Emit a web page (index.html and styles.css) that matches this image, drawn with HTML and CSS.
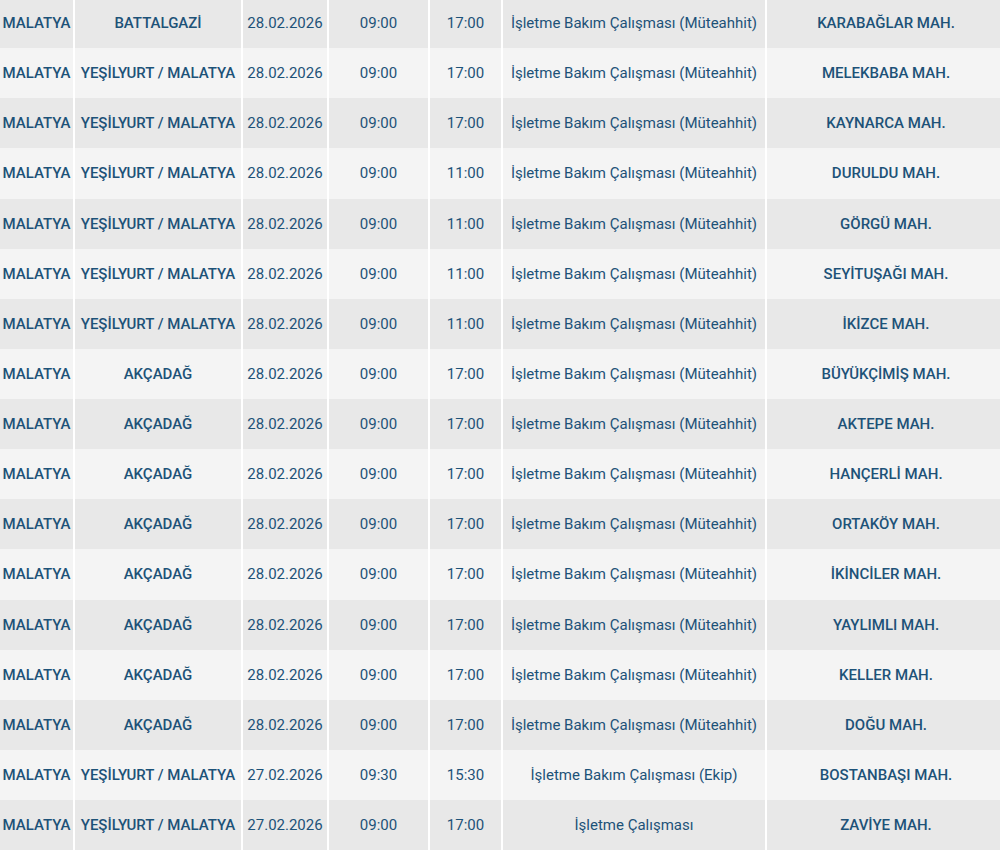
FILE: index.html
```html
<!DOCTYPE html>
<html lang="tr">
<head>
<meta charset="utf-8">
<link rel="stylesheet" href="styles.css">
</head>
<body>
<div class="wrap">
<table class="outages">
<colgroup>
<col class="c-city"><col class="c-dist"><col class="c-date"><col class="c-start"><col class="c-end"><col class="c-desc"><col class="c-mah">
</colgroup>
<tbody>
<tr><td class="b">MALATYA</td><td class="b">BATTALGAZİ</td><td>28.02.2026</td><td>09:00</td><td>17:00</td><td>İşletme Bakım Çalışması (Müteahhit)</td><td class="b">KARABAĞLAR MAH.</td></tr>
<tr><td class="b">MALATYA</td><td class="b">YEŞİLYURT / MALATYA</td><td>28.02.2026</td><td>09:00</td><td>17:00</td><td>İşletme Bakım Çalışması (Müteahhit)</td><td class="b">MELEKBABA MAH.</td></tr>
<tr><td class="b">MALATYA</td><td class="b">YEŞİLYURT / MALATYA</td><td>28.02.2026</td><td>09:00</td><td>17:00</td><td>İşletme Bakım Çalışması (Müteahhit)</td><td class="b">KAYNARCA MAH.</td></tr>
<tr><td class="b">MALATYA</td><td class="b">YEŞİLYURT / MALATYA</td><td>28.02.2026</td><td>09:00</td><td>11:00</td><td>İşletme Bakım Çalışması (Müteahhit)</td><td class="b">DURULDU MAH.</td></tr>
<tr><td class="b">MALATYA</td><td class="b">YEŞİLYURT / MALATYA</td><td>28.02.2026</td><td>09:00</td><td>11:00</td><td>İşletme Bakım Çalışması (Müteahhit)</td><td class="b">GÖRGÜ MAH.</td></tr>
<tr><td class="b">MALATYA</td><td class="b">YEŞİLYURT / MALATYA</td><td>28.02.2026</td><td>09:00</td><td>11:00</td><td>İşletme Bakım Çalışması (Müteahhit)</td><td class="b">SEYİTUŞAĞI MAH.</td></tr>
<tr><td class="b">MALATYA</td><td class="b">YEŞİLYURT / MALATYA</td><td>28.02.2026</td><td>09:00</td><td>11:00</td><td>İşletme Bakım Çalışması (Müteahhit)</td><td class="b">İKİZCE MAH.</td></tr>
<tr><td class="b">MALATYA</td><td class="b">AKÇADAĞ</td><td>28.02.2026</td><td>09:00</td><td>17:00</td><td>İşletme Bakım Çalışması (Müteahhit)</td><td class="b">BÜYÜKÇİMİŞ MAH.</td></tr>
<tr><td class="b">MALATYA</td><td class="b">AKÇADAĞ</td><td>28.02.2026</td><td>09:00</td><td>17:00</td><td>İşletme Bakım Çalışması (Müteahhit)</td><td class="b">AKTEPE MAH.</td></tr>
<tr><td class="b">MALATYA</td><td class="b">AKÇADAĞ</td><td>28.02.2026</td><td>09:00</td><td>17:00</td><td>İşletme Bakım Çalışması (Müteahhit)</td><td class="b">HANÇERLİ MAH.</td></tr>
<tr><td class="b">MALATYA</td><td class="b">AKÇADAĞ</td><td>28.02.2026</td><td>09:00</td><td>17:00</td><td>İşletme Bakım Çalışması (Müteahhit)</td><td class="b">ORTAKÖY MAH.</td></tr>
<tr><td class="b">MALATYA</td><td class="b">AKÇADAĞ</td><td>28.02.2026</td><td>09:00</td><td>17:00</td><td>İşletme Bakım Çalışması (Müteahhit)</td><td class="b">İKİNCİLER MAH.</td></tr>
<tr><td class="b">MALATYA</td><td class="b">AKÇADAĞ</td><td>28.02.2026</td><td>09:00</td><td>17:00</td><td>İşletme Bakım Çalışması (Müteahhit)</td><td class="b">YAYLIMLI MAH.</td></tr>
<tr><td class="b">MALATYA</td><td class="b">AKÇADAĞ</td><td>28.02.2026</td><td>09:00</td><td>17:00</td><td>İşletme Bakım Çalışması (Müteahhit)</td><td class="b">KELLER MAH.</td></tr>
<tr><td class="b">MALATYA</td><td class="b">AKÇADAĞ</td><td>28.02.2026</td><td>09:00</td><td>17:00</td><td>İşletme Bakım Çalışması (Müteahhit)</td><td class="b">DOĞU MAH.</td></tr>
<tr><td class="b">MALATYA</td><td class="b">YEŞİLYURT / MALATYA</td><td>27.02.2026</td><td>09:30</td><td>15:30</td><td>İşletme Bakım Çalışması (Ekip)</td><td class="b">BOSTANBAŞI MAH.</td></tr>
<tr><td class="b">MALATYA</td><td class="b">YEŞİLYURT / MALATYA</td><td>27.02.2026</td><td>09:00</td><td>17:00</td><td>İşletme Çalışması</td><td class="b">ZAVİYE MAH.</td></tr>
</tbody>
</table>
</div>
</body>
</html>
```

FILE: styles.css
```css
html, body {
  margin: 0;
  padding: 0;
  background: #ffffff;
  overflow: hidden;
}
.wrap {
  width: 1000px;
  height: 850px;
  overflow: hidden;
}
.outages {
  margin-top: -2px;
  border-collapse: collapse;
  table-layout: fixed;
  width: 1006px;
  font-family: Roboto, "Noto Sans", Arial, sans-serif;
  font-size: 15px;
  color: #1d5278;
}
.c-city { width: 74px; }
.c-dist { width: 168px; }
.c-date { width: 86px; }
.c-start { width: 101px; }
.c-end { width: 73px; }
.c-desc { width: 264px; }
.c-mah { width: 240px; }
.outages td {
  height: 50.125px;
  padding: 0;
  text-align: center;
  vertical-align: middle;
  border-left: 2px solid #ffffff;
  border-right: 2px solid #ffffff;
  white-space: nowrap;
  font-weight: 400;
}
.outages td:first-child { border-left: 0; }
.outages td.b { font-weight: 500; }
.outages tr:nth-child(odd) td { background: #e8e8e8; }
.outages tr:nth-child(even) td { background: #f4f4f4; }
```
